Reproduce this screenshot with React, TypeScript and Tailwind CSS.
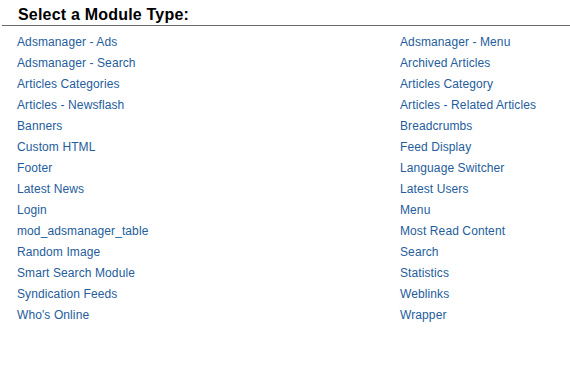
const left = [
  'Adsmanager - Ads',
  'Adsmanager - Search',
  'Articles Categories',
  'Articles - Newsflash',
  'Banners',
  'Custom HTML',
  'Footer',
  'Latest News',
  'Login',
  'mod_adsmanager_table',
  'Random Image',
  'Smart Search Module',
  'Syndication Feeds',
  "Who's Online",
]

const right = [
  'Adsmanager - Menu',
  'Archived Articles',
  'Articles Category',
  'Articles - Related Articles',
  'Breadcrumbs',
  'Feed Display',
  'Language Switcher',
  'Latest Users',
  'Menu',
  'Most Read Content',
  'Search',
  'Statistics',
  'Weblinks',
  'Wrapper',
]

function Column({ items }: { items: string[] }) {
  return (
    <ul className="flex flex-col">
      {items.map(name => (
        <li key={name} className="h-[21px] leading-[21px]">
          <a href="#" className="text-[12px] tracking-[0.1px] text-[#245d9c] hover:underline">
            {name}
          </a>
        </li>
      ))}
    </ul>
  )
}

export default function App() {
  return (
    <div className="w-[570px] h-[371px] bg-white font-['Liberation_Sans',Arial,sans-serif]">
      <div className="pt-[5px] pl-[2px]">
        <h2 className="pl-[16px] text-[16px] leading-[19px] font-bold tracking-[0.2px] text-black">
          Select a Module Type:
        </h2>
        <div className="mt-[1px] h-[1px] bg-[#6b6b6b]" />
      </div>
      <div className="grid grid-cols-[383px_1fr] pl-[17px] pt-[4px]">
        <Column items={left} />
        <Column items={right} />
      </div>
    </div>
  )
}
